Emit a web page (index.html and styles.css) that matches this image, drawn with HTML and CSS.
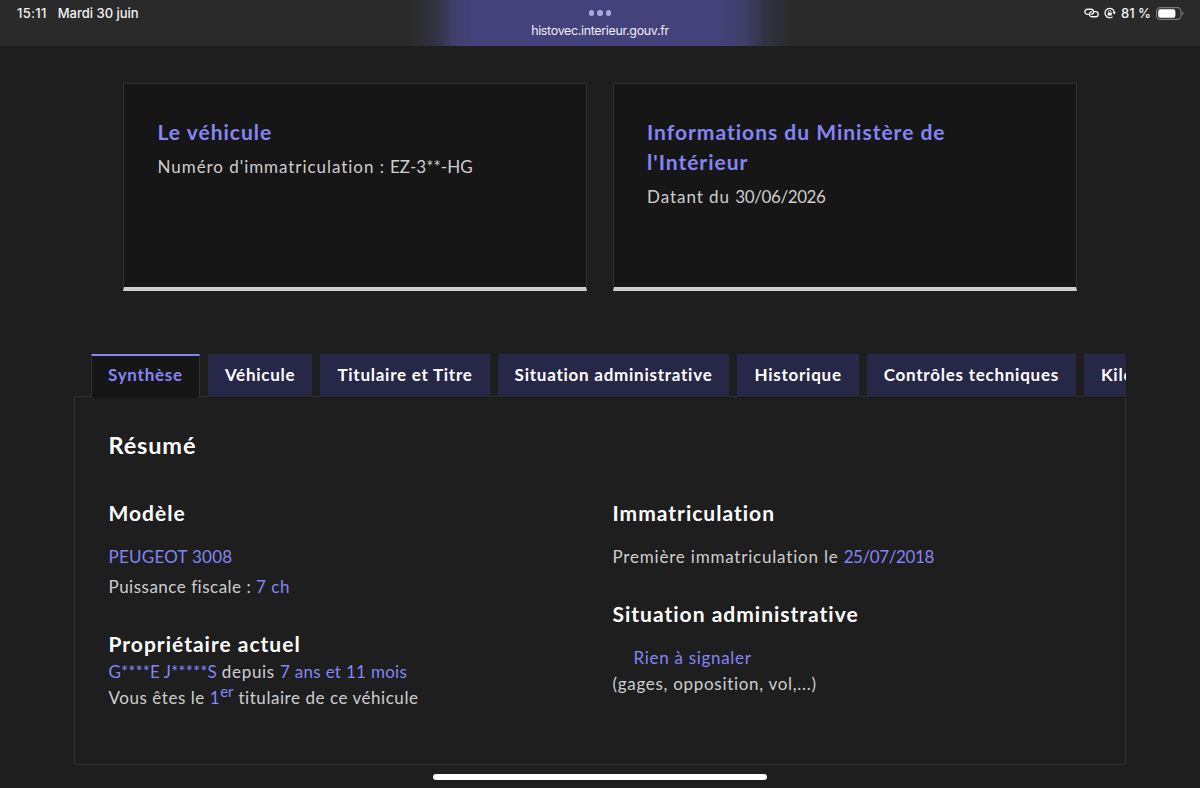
FILE: index.html
```
<!DOCTYPE html>
<html lang="fr">
<head>
    <meta charset="UTF-8">
    <meta name="viewport" content="width=device-width, initial-scale=1.0">
    <title>HistoVec</title>
    <link rel="stylesheet" href="styles.css">
</head>
<body>
    <header class="status-bar">
        <div class="status-left">
            <span class="time">15:11</span>
            <span>Mardi 30 juin</span>
        </div>
        <div class="status-center">
            <div class="dots"><i></i><i></i><i></i></div>
            <div class="url">histovec.interieur.gouv.fr</div>
        </div>
        <div class="status-right">
            <svg class="icon-link" width="15" height="10" viewBox="0 0 16 10" fill="none" stroke="currentColor" stroke-width="1.4" stroke-linecap="round">
                <path d="M5 6.400H3.600A2.700 2.700 0 0 1 3.600 1H7.600A2.700 2.700 0 0 1 8.200 6.300"/>
                <path d="M11 3.600H12.400A2.700 2.700 0 0 1 12.400 9H8.400A2.700 2.700 0 0 1 7.800 3.700"/>
            </svg>
            <svg class="icon-lock" width="12" height="12" viewBox="0 0 12 12" fill="none" stroke="currentColor">
                <path d="M8.600 9.800A4.700 4.700 0 1 1 10.300 5" stroke-width="1.300"/>
                <path d="M8.400 5.100h3.600l-1.800 2.500z" fill="currentColor" stroke="none"/>
                <rect x="3.600" y="5.400" width="4.200" height="3.200" rx=".5" fill="currentColor" stroke="none"/>
                <path d="M4.500 5.500V4.500a1.200 1.200 0 0 1 2.400 0v1" stroke-width=".8"/>
            </svg>
            <span class="percent">81 %</span>
            <svg class="icon-battery" width="28" height="13" viewBox="0 0 28 13">
                <rect x=".6" y=".6" width="24.300" height="11.800" rx="3.600" fill="none" stroke="#7b7b7b" stroke-width="1.100"/>
                <rect x="2.200" y="2.200" width="17.200" height="8.600" rx="2.200" fill="#fff"/>
                <path d="M26.200 4.500v4a2.200 2.200 0 0 0 0-4z" fill="#7b7b7b"/>
            </svg>
        </div>
    </header>

    <main>
        <section class="cards">
            <div class="card">
                <h4 class="card-title">Le véhicule</h4>
                <p><span class="plate-label">Numéro d'immatriculation :</span> <span class="masked">EZ-3**-HG</span></p>
            </div>
            <div class="card">
                <h4 class="card-title">Informations du Ministère de l'Intérieur</h4>
                <p class="dated">Datant du <span class="num">30/06/2026</span></p>
            </div>
        </section>

        <section class="tabs">
            <div class="tab-list">
                <button class="tab active">Synthèse</button>
                <button class="tab">Véhicule</button>
                <button class="tab">Titulaire et Titre</button>
                <button class="tab">Situation administrative</button>
                <button class="tab">Historique</button>
                <button class="tab">Contrôles techniques</button>
                <button class="tab">Kilométrage</button>
            </div>
            <div class="panel">
                <h2>Résumé</h2>
                <div class="columns">
                    <div>
                        <h3>Modèle</h3>
                        <p class="row first"><span class="blue caps">PEUGEOT 3008</span></p>
                        <p class="row spaced power">Puissance fiscale : <span class="blue">7 ch</span></p>
                        <h3 class="next owner">Propriétaire actuel</h3>
                        <p class="row"><span class="blue masked">G****E J*****S</span> depuis <span class="blue duration">7 ans et 11 mois</span></p>
                        <p class="row holder">Vous êtes le <span class="blue">1<sup>er</sup></span> titulaire de ce véhicule</p>
                    </div>
                    <div>
                        <h3>Immatriculation</h3>
                        <p class="row first registered">Première immatriculation le <span class="blue num">25/07/2018</span></p>
                        <h3 class="next">Situation administrative</h3>
                        <p class="row first indent"><span class="blue">Rien à signaler</span></p>
                        <p class="row">(gages, opposition, vol,...)</p>
                    </div>
                </div>
            </div>
        </section>
    </main>
    <div class="home-bar"></div>
</body>
</html>
```
FILE: styles.css
```
* {
    box-sizing: border-box;
}
body {
    margin: 0;
    height: 788px;
    overflow: hidden;
    background: #1e1e1e;
    color: #cecece;
    font-family: Lato, "Open Sans", sans-serif;
    font-size: 17px;
    line-height: 26px;
    letter-spacing: 0.7px;
    font-variant-ligatures: none;
}
h2, h3, h4, p {
    margin: 0;
}

/* status bar */
.status-bar {
    display: grid;
    grid-template-columns: 410px 380px 410px;
    height: 46px;
    background: #2a2a2a;
    color: #f2f2f2;
    font-family: Inter, sans-serif;
    font-size: 13px;
    font-weight: 500;
    line-height: 16px;
    letter-spacing: 0;
}
.status-left {
    display: flex;
    gap: 11px;
    padding: 5px 0 0 17px;
}
.time {
    letter-spacing: 0.3px;
}
.status-center {
    display: flex;
    flex-direction: column;
    align-items: center;
    background: linear-gradient(90deg, #2a2a2a 0, #343344 28px, #3f3e66 42px, #43427a 62px, #43427a 308px, #3f3e66 336px, #343344 354px, #2a2a2a 380px);
}
.dots {
    display: flex;
    gap: 3px;
    padding-top: 10px;
}
.dots i {
    width: 5.5px;
    height: 5.5px;
    border-radius: 50%;
    background: #a9a6e4;
}
.url {
    margin-top: 7px;
    font-size: 12.5px;
    font-weight: 400;
    letter-spacing: -0.35px;
    color: #eeeefa;
}
.status-right {
    display: flex;
    justify-content: flex-end;
    align-items: center;
    height: 26px;
    padding-right: 16px;
}
.icon-lock {
    margin-left: 5px;
}
.percent {
    margin: 0 5px;
}

/* top cards */
.cards {
    display: grid;
    grid-template-columns: 464px 464px;
    gap: 25.5px;
    padding: 37px 0 0 123px;
}
.card {
    height: 208px;
    padding: 33px 33.5px;
    background: #161616;
    border: 1px solid #303030;
    border-bottom: 4px solid #cecece;
}
.card-title {
    margin-bottom: 7px;
    color: #8585f6;
    font-size: 21px;
    line-height: 30px;
    letter-spacing: 1px;
}
.plate-label {
    letter-spacing: 0.95px;
}
.dated {
    letter-spacing: 0.95px;
}

/* tabs */
.tabs {
    width: 1052px;
    margin: 63px 0 0 74px;
}
.tab-list {
    display: flex;
    position: relative;
    gap: 8px;
    height: 45px;
    padding-left: 17px;
    overflow: hidden;
}
.tab {
    flex: none;
    height: 42px;
    padding: 0 17px;
    border: 0;
    background: #272747;
    box-shadow: 0 1px 0 #2a2a28, 0 2px 0 #181818;
    color: #fff;
    font: 700 17px/42px Lato, sans-serif;
    letter-spacing: 0.75px;
}
.tab.active {
    height: 44px;
    padding: 0 16px 4px;
    border: 1px solid #303030;
    border-top: 2px solid #8585f6;
    border-bottom: 0;
    background: #161616;
    box-shadow: none;
    color: #8585f6;
    line-height: 38px;
}
.panel {
    height: 369px;
    margin-top: -3px;
    padding: 33px 33.5px 0;
    border: 1px solid #303030;
}
h2, h3 {
    color: #fff;
}
h2 {
    font-size: 23.5px;
    line-height: 30px;
    letter-spacing: 0.85px;
}
h3 {
    font-size: 21px;
    line-height: 28px;
    letter-spacing: 1px;
}
.columns {
    display: grid;
    grid-template-columns: 504px 1fr;
    padding-top: 39px;
}
.row.first {
    margin-top: 17px;
}
.row.spaced {
    margin-top: 4px;
}
.next {
    margin-top: 30px;
}
.owner {
    margin-bottom: 1px;
}
.indent {
    padding-left: 21px;
}
.blue {
    color: #8585f6;
}
.num {
    letter-spacing: -0.4px;
}
.registered {
    letter-spacing: 0.8px;
}
.power {
    letter-spacing: 0.5px;
}
.caps {
    letter-spacing: 0.25px;
}
.masked {
    letter-spacing: 0.05px;
}
.duration {
    letter-spacing: 0.3px;
}
.holder {
    letter-spacing: 0.55px;
}
sup {
    font-size: 15px;
    line-height: 0;
    letter-spacing: 0;
}
.home-bar {
    width: 334px;
    height: 6px;
    margin: 9px auto 0;
    border-radius: 3px;
    background: #fff;
}
```
